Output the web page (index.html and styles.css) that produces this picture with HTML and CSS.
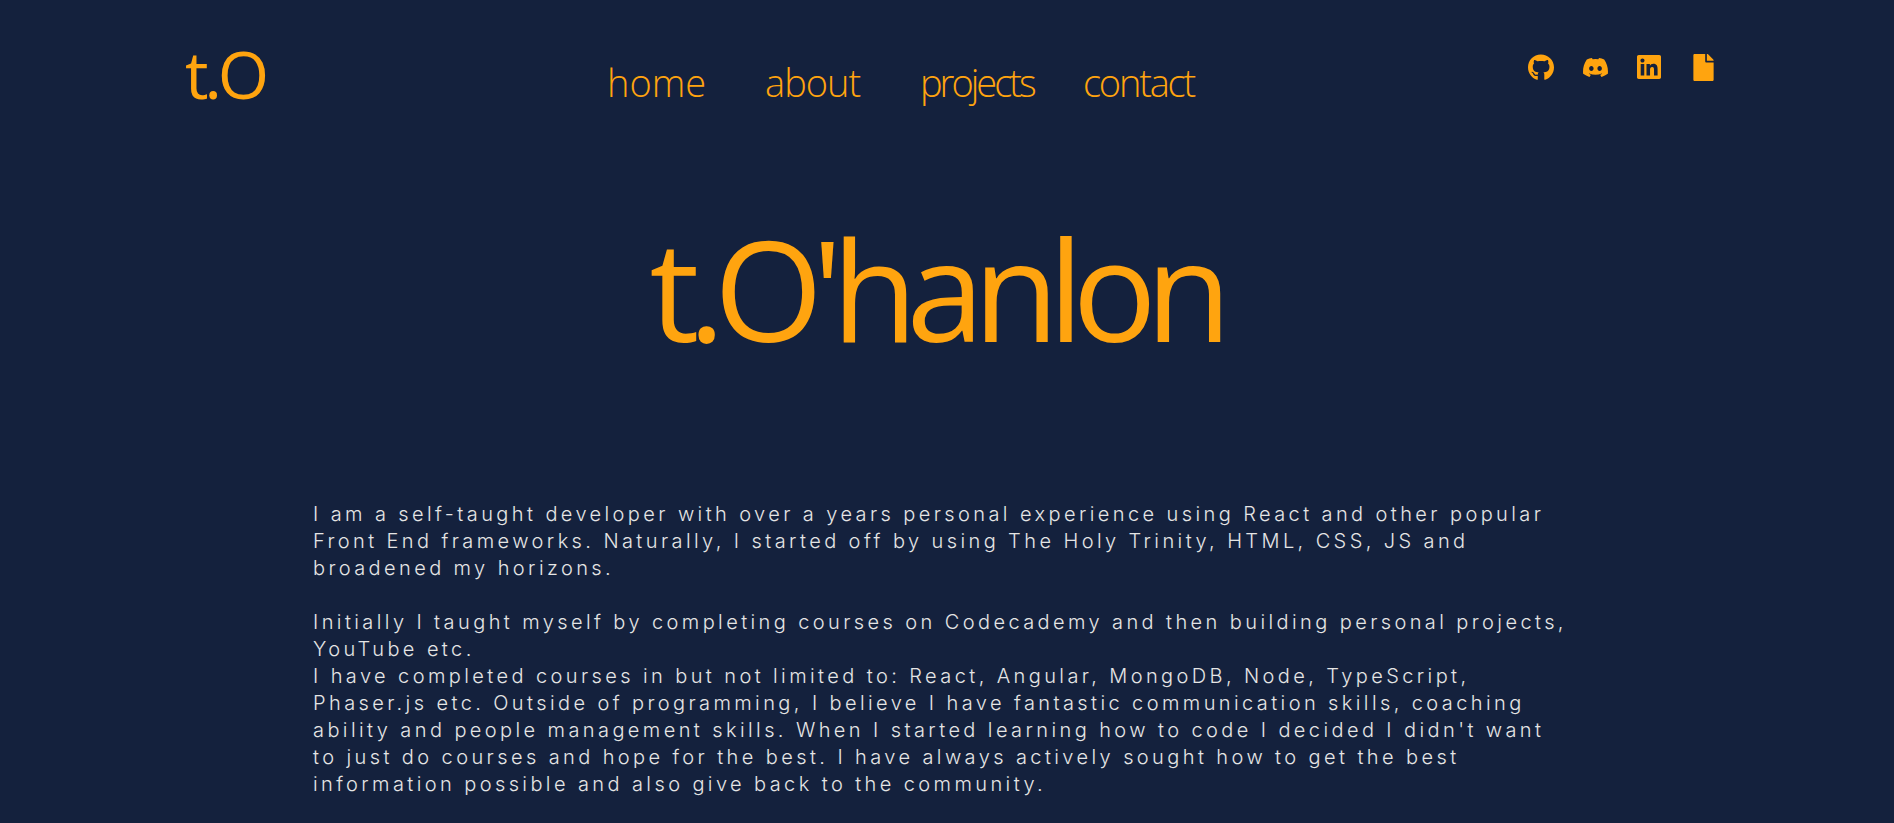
FILE: index.html
```html
<!DOCTYPE html>
<html lang="en">
<head>
<meta charset="utf-8">
<title>t.O'hanlon</title>
<link rel="stylesheet" href="styles.css">
</head>
<body>
<header class="topbar">
  <a class="logo" href="#">t.O</a>
  <nav class="nav">
    <a class="nav-link home" href="#">home</a>
    <a class="nav-link about" href="#">about</a>
    <a class="nav-link projects" href="#">projects</a>
    <a class="nav-link contact" href="#">contact</a>
  </nav>
  <div class="socials">
    <a class="social" href="#" aria-label="GitHub"><svg class="ic-github" viewBox="0 0 496 512"><path d="M165.9 397.4c0 2-2.3 3.6-5.2 3.6-3.3 0-5.6-1.6-5.6-3.6 0-2 2.3-3.6 5.2-3.6 3-.3 5.6 1.3 5.6 3.6zm-31.1-4.5c-.7 2 1.3 4.3 4.3 4.9 2.6 1 5.6 0 6.2-2s-1.3-4.3-4.3-5c-2.6-.7-5.5.3-6.2 2.1zm44.2-1.7c-2.9.7-4.9 2.6-4.6 4.9.3 2 2.9 3.3 5.9 2.6 2.9-.7 4.9-2.6 4.6-4.6-.3-1.9-3-3.2-5.9-2.9zM244.8 8C106.1 8 0 113.3 0 252c0 110.9 69.8 205.8 169.5 239.2 12.8 2.3 17.3-5.6 17.3-12.1 0-6.2-.3-40.4-.3-61.4 0 0-70 15-84.7-29.8 0 0-11.4-29.1-27.8-36.6 0 0-22.9-15.7 1.6-15.4 0 0 24.9 2 38.6 25.8 21.9 38.6 58.6 27.5 72.9 20.9 2.3-16 8.8-27.1 16-33.7-55.9-6.2-112.3-14.3-112.3-110.5 0-27.5 7.6-41.3 23.6-58.9-2.6-6.5-11.1-33.3 2.6-67.9 20.9-6.5 69 27 69 27 20-5.6 41.5-8.5 62.8-8.5s42.8 2.9 62.8 8.5c0 0 48.1-33.6 69-27 13.7 34.7 5.2 61.4 2.6 67.9 16 17.7 25.8 31.5 25.8 58.9 0 96.5-58.9 104.2-114.8 110.5 9.2 7.9 17 22.9 17 46.4 0 33.7-.3 75.4-.3 83.6 0 6.5 4.6 14.4 17.3 12.1C428.2 457.8 496 362.9 496 252 496 113.3 383.5 8 244.8 8z"/></svg></a>
    <a class="social" href="#" aria-label="Discord"><svg class="ic-discord" viewBox="28 32 584 448"><path d="M524.531,69.836a1.5,1.5,0,0,0-.764-.7A485.065,485.065,0,0,0,404.081,32.03a1.816,1.816,0,0,0-1.923.91,337.461,337.461,0,0,0-14.9,30.6,447.848,447.848,0,0,0-134.426,0,309.541,309.541,0,0,0-15.135-30.6,1.89,1.89,0,0,0-1.924-.91A483.689,483.689,0,0,0,116.085,69.137a1.712,1.712,0,0,0-.788.676C39.068,183.651,18.186,294.69,28.43,404.354a2.016,2.016,0,0,0,.765,1.375A487.666,487.666,0,0,0,176.02,479.918a1.9,1.9,0,0,0,2.063-.676A348.2,348.2,0,0,0,208.12,430.4a1.86,1.86,0,0,0-1.019-2.588,321.173,321.173,0,0,1-45.868-21.853,1.885,1.885,0,0,1-.185-3.126c3.082-2.309,6.166-4.711,9.109-7.137a1.819,1.819,0,0,1,1.9-.256c96.229,43.917,200.41,43.917,295.5,0a1.812,1.812,0,0,1,1.924.233c2.944,2.426,6.027,4.851,9.132,7.16a1.884,1.884,0,0,1-.162,3.126,301.407,301.407,0,0,1-45.89,21.83,1.875,1.875,0,0,0-1,2.611,391.055,391.055,0,0,0,30.014,48.815,1.864,1.864,0,0,0,2.063.7A486.048,486.048,0,0,0,610.7,405.729a1.882,1.882,0,0,0,.765-1.352C623.729,277.594,590.933,167.465,524.531,69.836ZM222.491,337.58c-28.972,0-52.844-26.587-52.844-59.239S193.056,219.1,222.491,219.1c29.665,0,53.306,26.82,52.843,59.239C275.334,310.993,251.924,337.58,222.491,337.58Zm195.38,0c-28.971,0-52.843-26.587-52.843-59.239S388.437,219.1,417.871,219.1c29.667,0,53.307,26.82,52.844,59.239C470.715,310.993,447.538,337.58,417.871,337.58Z"/></svg></a>
    <a class="social" href="#" aria-label="LinkedIn"><svg class="ic-linkedin" viewBox="0 32 448 448"><path d="M416 32H31.9C14.3 32 0 46.5 0 64.3v383.4C0 465.5 14.3 480 31.9 480H416c17.6 0 32-14.5 32-32.3V64.3c0-17.8-14.4-32.3-32-32.3zM135.4 416H69V202.2h66.5V416zm-33.2-243c-21.3 0-38.5-17.3-38.5-38.5S80.9 96 102.2 96c21.2 0 38.5 17.3 38.5 38.5 0 21.3-17.2 38.5-38.5 38.5zm282.1 243h-66.4V312c0-24.8-.5-56.7-34.5-56.7-34.6 0-39.9 27-39.9 54.9V416h-66.4V202.2h63.7v29.2h.9c8.9-16.8 30.6-34.5 62.9-34.5 67.2 0 79.7 44.3 79.7 101.9V416z"/></svg></a>
    <a class="social" href="#" aria-label="CV"><svg class="ic-file" viewBox="0 0 384 512"><path d="M224 136V0H24C10.7 0 0 10.7 0 24v464c0 13.3 10.7 24 24 24h336c13.3 0 24-10.7 24-24V160H248c-13.2 0-24-10.8-24-24zm160-14.1v6.1H256V0h6.1c6.4 0 12.5 2.5 17 7l97.9 98c4.5 4.5 7 10.6 7 16.9z"/></svg></a>
  </div>
</header>
<main class="content">
  <h1 class="title">t.O'hanlon</h1>
  <section class="bio">
    <p class="bio-para">I am a self-taught developer with over a years personal experience using React and other popular<br>Front End frameworks. Naturally, I started off by using The Holy Trinity, HTML, CSS, JS and<br>broadened my horizons.</p>
    <p class="bio-para">Initially I taught myself by completing courses on Codecademy and then building personal projects,<br>YouTube etc.<br>I have completed courses in but not limited to: React, Angular, MongoDB, Node, TypeScript,<br>Phaser.js etc. Outside of programming, I believe I have fantastic communication skills, coaching<br>ability and people management skills. When I started learning how to code I decided I didn't want<br>to just do courses and hope for the best. I have always actively sought how to get the best<br>information possible and also give back to the community.</p>
  </section>
</main>
</body>
</html>
```
FILE: styles.css
```css
* { box-sizing: border-box; }
html, body { margin: 0; padding: 0; }
body {
  background: #14213d;
  color: #e5e5e5;
  font-family: "Inter", "Liberation Sans", sans-serif;
}
a { color: inherit; text-decoration: none; }

.topbar {
  display: flex;
  align-items: flex-start;
  height: 130px;
  padding: 0 164px 0 185px;
  color: #ffa40f;
}
.logo {
  width: 422px;
  margin-top: 28px;
  font-family: "Open Sans", sans-serif;
  font-size: 66px;
  line-height: 90px;
  letter-spacing: -4px;
  font-weight: 500;
}
.nav {
  display: grid;
  grid-template-columns: 158px 155px 163px 113px;
  margin-top: 54px;
  font-family: "Open Sans", sans-serif;
  font-size: 38px;
  line-height: 56px;
  font-weight: 300;
}
.nav-link { display: block; }
.about { letter-spacing: -1px; }
.projects { letter-spacing: -3px; }
.contact { letter-spacing: -2.2px; }

.socials {
  display: flex;
  margin: 53px 0 0 auto;
}
.social {
  display: flex;
  align-items: center;
  justify-content: center;
  width: 54px;
  height: 28px;
}
.social svg { display: block; fill: currentColor; }
.ic-github { width: 26px; height: 27px; }
.ic-discord { width: 25px; height: 19px; }
.ic-linkedin { width: 24px; height: 24px; }
.ic-file { width: 21px; height: 27px; }

.title {
  margin: 63px 0 0;
  padding-right: 24px;
  text-align: center;
  color: #ffa40f;
  font-family: "Open Sans", sans-serif;
  font-size: 140px;
  line-height: 190px;
  letter-spacing: -11px;
  font-weight: 500;
}
.bio {
  margin: 118px 0 0 313px;
  width: 1268px;
  font-size: 20px;
  line-height: 27px;
  font-weight: 350;
  letter-spacing: 3.4px;
}
.bio-para { margin: 0 0 27px; white-space: nowrap; }
```
